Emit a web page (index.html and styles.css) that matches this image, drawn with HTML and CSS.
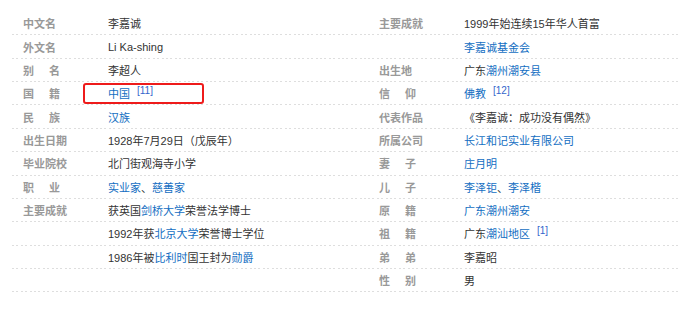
FILE: index.html
```html
<!DOCTYPE html>
<html lang="zh-CN">
<head>
<meta charset="utf-8">
<title>李嘉诚</title>
<link rel="stylesheet" href="styles.css">
</head>
<body>
<div class="info">
  <dl class="col">
    <div class="row"><dt class="name">中文名</dt><dd class="value">李嘉诚</dd></div>
    <div class="row"><dt class="name">外文名</dt><dd class="value">Li Ka-shing</dd></div>
    <div class="row"><dt class="name sp">别<i></i>名</dt><dd class="value">李超人</dd></div>
    <div class="row"><dt class="name sp">国<i></i>籍</dt><dd class="value"><a>中国</a><sup class="ref">[11]</sup></dd></div>
    <div class="row"><dt class="name sp">民<i></i>族</dt><dd class="value"><a>汉族</a></dd></div>
    <div class="row"><dt class="name">出生日期</dt><dd class="value">1928年7月29日（戊辰年）</dd></div>
    <div class="row"><dt class="name">毕业院校</dt><dd class="value">北门街观海寺小学</dd></div>
    <div class="row"><dt class="name sp">职<i></i>业</dt><dd class="value"><a>实业家</a>、<a>慈善家</a></dd></div>
    <div class="row"><dt class="name">主要成就</dt><dd class="value">获英国<a>剑桥大学</a>荣誉法学博士</dd></div>
    <div class="row"><dt class="name"></dt><dd class="value">1992年获<a>北京大学</a>荣誉博士学位</dd></div>
    <div class="row"><dt class="name"></dt><dd class="value">1986年被<a>比利时</a>国王封为<a>勋爵</a></dd></div>
    <div class="row"><dt class="name"></dt><dd class="value"></dd></div>
  </dl>
  <dl class="col">
    <div class="row"><dt class="name">主要成就</dt><dd class="value">1999年始连续15年华人首富</dd></div>
    <div class="row"><dt class="name"></dt><dd class="value"><a>李嘉诚基金会</a></dd></div>
    <div class="row"><dt class="name">出生地</dt><dd class="value">广东<a>潮州</a><a>潮安县</a></dd></div>
    <div class="row"><dt class="name sp">信<i></i>仰</dt><dd class="value"><a>佛教</a><sup class="ref">[12]</sup></dd></div>
    <div class="row"><dt class="name">代表作品</dt><dd class="value">《李嘉诚：成功没有偶然》</dd></div>
    <div class="row"><dt class="name">所属公司</dt><dd class="value"><a>长江和记实业有限公司</a></dd></div>
    <div class="row"><dt class="name sp">妻<i></i>子</dt><dd class="value"><a>庄月明</a></dd></div>
    <div class="row"><dt class="name sp">儿<i></i>子</dt><dd class="value"><a>李泽钜</a>、<a>李泽楷</a></dd></div>
    <div class="row"><dt class="name sp">原<i></i>籍</dt><dd class="value"><a>广东潮州潮安</a></dd></div>
    <div class="row"><dt class="name sp">祖<i></i>籍</dt><dd class="value">广东<a>潮汕地区</a><sup class="ref">[1]</sup></dd></div>
    <div class="row"><dt class="name sp">弟<i></i>弟</dt><dd class="value">李嘉昭</dd></div>
    <div class="row"><dt class="name sp">性<i></i>别</dt><dd class="value">男</dd></div>
  </dl>
  <div class="mark"></div>
</div>
</body>
</html>
```
FILE: styles.css
```css
html, body {
  margin: 0;
  padding: 0;
  background: #fff;
  overflow: hidden;
}
body {
  font-family: "Liberation Sans", "Noto Sans CJK SC", sans-serif;
  font-size: 11px;
  color: #333;
}
.info {
  position: relative;
  display: grid;
  grid-template-columns: 356px 311px;
  padding: 12px 0 0 12px;
  width: 679px;
  box-sizing: border-box;
}
.col {
  margin: 0;
  display: flex;
  flex-direction: column;
  min-width: 0;
}
.row {
  display: flex;
  align-items: center;
  height: 23.36px;
  box-sizing: border-box;
  background-image: repeating-linear-gradient(90deg, #dedede 0 2px, transparent 2px 4.4px);
  background-repeat: no-repeat;
  background-position: left bottom;
  background-size: 100% 1px;
  padding-bottom: 1px;
}
.name {
  box-sizing: border-box;
  width: 96px;
  flex: none;
  padding-left: 11px;
  color: #999;
  font-weight: 700;
  display: flex;
}
.name.sp i {
  display: inline-block;
  width: 15px;
}
.value {
  margin: 0;
  white-space: nowrap;
}
.value a {
  color: #136ec2;
  text-decoration: none;
}
.ref {
  color: #3366cc;
  font-size: 10px;
  margin-left: 7px;
  vertical-align: 4px;
  line-height: 0;
}
.mark {
  position: absolute;
  left: 83px;
  top: 83px;
  width: 121px;
  height: 21px;
  box-sizing: border-box;
  border: 2px solid #ee1b1b;
  border-radius: 3px;
}
```
